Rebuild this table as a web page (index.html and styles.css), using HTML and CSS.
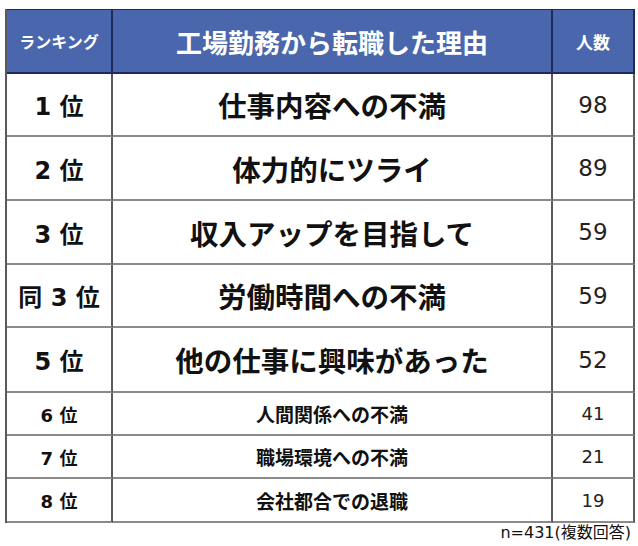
FILE: index.html
```html
<!DOCTYPE html>
<html lang="ja">
<head>
<meta charset="utf-8">
<link rel="stylesheet" href="styles.css">
</head>
<body>
<div class="wrap">
  <div class="grid">
    <div class="cell head h-rank">ランキング</div>
    <div class="cell head h-title">工場勤務から転職した理由</div>
    <div class="cell head h-num">人数</div>

    <div class="cell big rank">1 位</div>
    <div class="cell big reason">仕事内容への不満</div>
    <div class="cell big num">98</div>

    <div class="cell big rank">2 位</div>
    <div class="cell big reason">体力的にツライ</div>
    <div class="cell big num">89</div>

    <div class="cell big rank">3 位</div>
    <div class="cell big reason">収入アップを目指して</div>
    <div class="cell big num">59</div>

    <div class="cell big rank">同 3 位</div>
    <div class="cell big reason">労働時間への不満</div>
    <div class="cell big num">59</div>

    <div class="cell big rank">5 位</div>
    <div class="cell big reason">他の仕事に興味があった</div>
    <div class="cell big num">52</div>

    <div class="cell small rank">6 位</div>
    <div class="cell small reason">人間関係への不満</div>
    <div class="cell small num">41</div>

    <div class="cell small rank">7 位</div>
    <div class="cell small reason">職場環境への不満</div>
    <div class="cell small num">21</div>

    <div class="cell small rank">8 位</div>
    <div class="cell small reason">会社都合での退職</div>
    <div class="cell small num">19</div>
  </div>
  <div class="note">n=431(複数回答)</div>
</div>
</body>
</html>
```

FILE: styles.css
```css
html, body {
  margin: 0;
  padding: 0;
  background: #ffffff;
}
body {
  font-family: "Noto Sans CJK JP", "Noto Sans", sans-serif;
  color: #111111;
}
.wrap {
  padding: 9px 0 0 5px;
  width: 628px;
}
.grid {
  display: grid;
  grid-template-columns: 106px 440px 82px;
  grid-template-rows: 65px 63px 64px 64px 63px 65px 43px 43px 44px;
  border-left: 2px solid #5a5a5a;
  box-sizing: border-box;
}
.cell {
  display: flex;
  align-items: center;
  justify-content: center;
  box-sizing: border-box;
  border-right: 2px solid #5a5a5a;
  border-bottom: 2px solid #8a8a8a;
  white-space: nowrap;
}
.head {
  background: #4a67ad;
  color: #ffffff;
  font-weight: bold;
  border-right-color: #1e2b5a;
  border-bottom-color: #1e2b5a;
  border-top: 1px solid #1e2b5a;
}
.h-rank { font-size: 16px; }
.h-title { font-size: 26px; }
.h-num { font-size: 17px; }
.rank {
  font-family: "DejaVu Sans", "Noto Sans CJK JP", sans-serif;
  font-weight: bold;
}
.reason { font-weight: bold; }
.num {
  font-family: "DejaVu Sans", "Noto Sans CJK JP", sans-serif;
  font-weight: normal;
  color: #222;
}
.big.rank { font-size: 24px; }
.big.reason { font-size: 28.5px; }
.big.num { font-size: 23px; }
.small.rank { font-size: 18px; }
.small.reason { font-size: 19px; }
.small.num { font-size: 18px; }
.note {
  font-family: "DejaVu Sans", "Noto Sans CJK JP", sans-serif;
  text-align: right;
  font-size: 16px;
  line-height: 20px;
  padding-right: 2px;
  margin-top: 0;
  color: #111;
}
```
